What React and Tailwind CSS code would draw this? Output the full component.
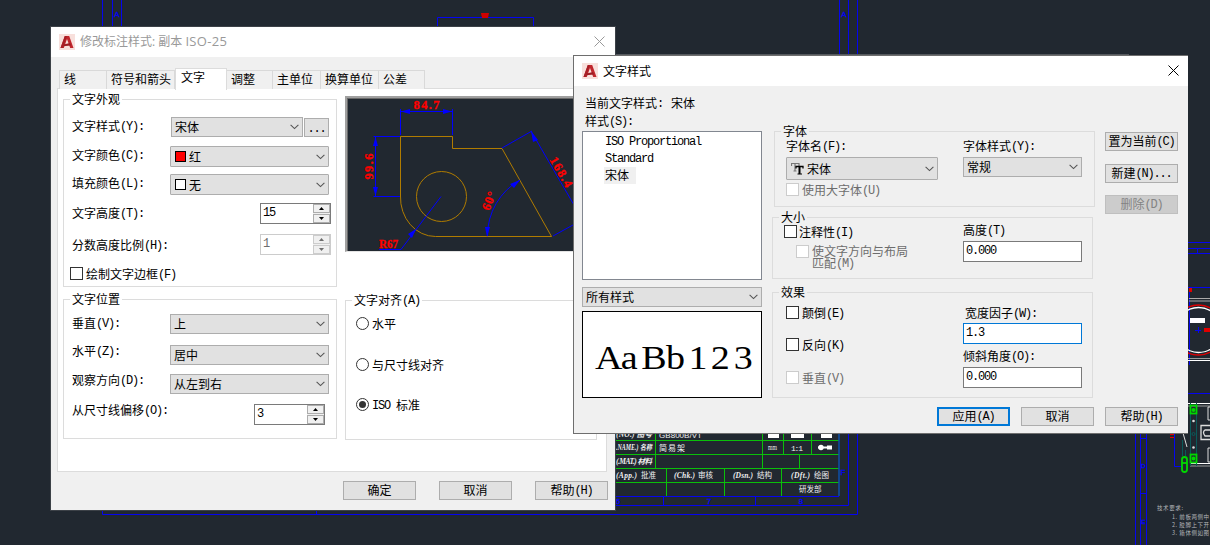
import React from "react";

const CJK = /([\u3000-\u9fff\uff00-\uffef]+)/;

// Dialog text: 12px Chinese glyphs mixed with half-width (6px) monospaced Latin.
function T({ children, className = "" }) {
  return (
    <span className={`inline-block whitespace-pre ${className}`}>
      {String(children)
        .split(CJK)
        .filter(Boolean)
        .map((part, i) =>
          CJK.test(part) ? (
            <span key={i}>{part}</span>
          ) : (
            <span
              key={i}
              className="align-[1px] font-['Liberation_Mono',monospace] text-[12px] leading-[0] tracking-[-1.2px]"
            >
              {part}
            </span>
          )
        )}
    </span>
  );
}

function Logo() {
  return (
    <svg width="16" height="16" viewBox="0 0 16 16" className="shrink-0">
      <rect width="16" height="16" fill="#f8e0dc" />
      <path d="M1.500 14 5.800 2H10.200L14.500 14H11.200L8 5 4.800 14Z" fill="#c0272d" />
      <path d="M4.500 10.500 11 9 12 11.500 4 12.200Z" fill="#9c1c22" />
      <path d="M5.800 2H8L3.800 14H1.500Z" fill="#a81f26" />
    </svg>
  );
}

function Close({ color, className = "" }) {
  return (
    <svg width="11" height="11" viewBox="0 0 11 11" className={className}>
      <path d="M.5 .5 10.5 10.5M10.5 .5 .5 10.5" stroke={color} />
    </svg>
  );
}

function Combo({ className = "", children }) {
  return (
    <div className={`flex shrink-0 items-center border border-[#adadad] bg-[#e1e1e1] ${className}`}>
      {children}
      <svg width="9" height="6" viewBox="0 0 9 6" className="ml-auto mr-[3px] shrink-0">
        <path d="M.6 .8 4.500 4.600 8.400 .8" fill="none" stroke="#555" strokeWidth="1.100" />
      </svg>
    </div>
  );
}

function Spinner({ value, disabled, className = "" }) {
  const color = disabled ? "#6d6d6d" : "#000";
  return (
    <div
      className={`flex h-[21px] w-[71px] shrink-0 border bg-white ${
        disabled ? "border-[#ccc] text-[#6d6d6d]" : "border-[#7a7a7a]"
      } ${className}`}
    >
      <T className="ml-[2px] mt-px">{value}</T>
      <div className="ml-auto flex w-[17px] flex-col gap-px bg-[#f0f0f0]">
        {["M0 3 2.5 0 5 3Z", "M0 0 5 0 2.5 3Z"].map((d) => (
          <div
            key={d}
            className={`flex h-[9px] items-center justify-center border ${
              disabled ? "border-[#ccc]" : "border-[#adadad]"
            }`}
          >
            <svg width="5" height="3" viewBox="0 0 5 3">
              <path d={d} fill={color} />
            </svg>
          </div>
        ))}
      </div>
    </div>
  );
}

function Check({ label, disabled, className = "", gap = "gap-[3px]" }) {
  return (
    <div className={`flex h-[13px] items-center ${gap} ${disabled ? "text-[#6d6d6d]" : ""} ${className}`}>
      <div className={`size-[13px] shrink-0 border bg-white ${disabled ? "border-[#ccc]" : "border-[#333]"}`} />
      <T>{label}</T>
    </div>
  );
}

function Radio({ label, on, className = "" }) {
  return (
    <div className={`flex h-[13px] items-center gap-[3px] ${className}`}>
      <div className="flex size-[13px] items-center justify-center rounded-full border border-[#333] bg-white">
        {on && <div className="size-[7px] rounded-full bg-[#333]" />}
      </div>
      <T>{label}</T>
    </div>
  );
}

function Group({ title, className = "", bg, children }) {
  return (
    <div className={`flex shrink-0 flex-col border border-[#dcdcdc] ${className}`}>
      <div className={`-mt-[8px] ml-[6px] flex h-[14px] shrink-0 self-start px-[2px] ${bg}`}>
        <T>{title}</T>
      </div>
      {children}
    </div>
  );
}

function Field({ label, labelClass = "", className = "", children }) {
  return (
    <div className={`ml-[8px] flex shrink-0 items-start ${className}`}>
      <T className={`shrink-0 ${labelClass}`}>{label}</T>
      {children}
    </div>
  );
}

function Button({ children, className = "border border-[#adadad] bg-[#e1e1e1]" }) {
  return (
    <div className={`flex h-[19px] w-[73px] shrink-0 items-center justify-center pb-[2px] ${className}`}>
      <T>{children}</T>
    </div>
  );
}

function Input({ children, className = "border-[#7a7a7a]" }) {
  return (
    <div className={`flex h-[21px] w-[119px] shrink-0 items-start border bg-white pl-[2px] pt-px ${className}`}>
      <T>{children}</T>
    </div>
  );
}

function StylePreview() {
  return (
    <svg
      width="226"
      height="152"
      viewBox="348 99 226 152"
      fill="none"
      className="block bg-[#212830] font-['Liberation_Serif',serif]"
    >
      <g stroke="#b07c00">
        <path d="M400.5 196V136.5H452.5V148.5H502L551.5 236.500H435.500A35 39 0 0 1 400.500 196" />
        <circle cx="441.500" cy="196.500" r="25" />
      </g>
      <g stroke="#0000ff">
        <path d="M400.5 109V135M452.500 109V135M400.500 111.500H452.500M373.500 136.500H400M373.500 196.500H400M375.500 137V196M379 249.500H401L441 196.500M487.500 236A64 64 0 0 1 520 180M502 148 532 131M553 236 582 220M531 131 592 236" />
      </g>
      <g fill="#0000ff">
        <path d="M401 111.500l9-2.500v5ZM452 111.500l-9-2.500v5ZM375.500 137l-2.500 9h5ZM375.500 196l-2.500-9h5ZM416 229l-8 5 4 4ZM487 237l-2-10h5ZM520 180l-10 4 4 4ZM531 131l2 11 5-2Z" />
      </g>
      <g fill="#ff0000" stroke="#ff0000" strokeWidth=".3" fontSize="12.500" fontWeight="700" textAnchor="middle">
        <text x="426.500" y="109" textLength="26">84.7</text>
        <text x="0" y="4" textLength="26" transform="translate(369 166.500) rotate(-90)">99.6</text>
        <text x="388.500" y="248" textLength="19" lengthAdjust="spacingAndGlyphs">R67</text>
        <text x="0" y="4" textLength="19" transform="translate(489 201) rotate(-68)">60°</text>
        <text x="0" y="4" textLength="33" transform="translate(561 172) rotate(60)">168.4</text>
      </g>
    </svg>
  );
}

function Drawing() {
  return (
    <svg width="1210" height="545" viewBox="0 0 1210 545" fill="none" className="absolute inset-0">
      <g stroke="#0505f0">
        <path d="M102.500 0V514.500H857.500V0M112.500 0V30M121.500 0V30M839.500 0V56M848.500 0V56M615 505.500H848.500V430M615 496.500H839M663.500 496V505M755.500 496V505M316.500 510V515" />
        <path d="M437.500 27V17.500H533.500V27" />
        <path d="M1135.500 433V545M1140.500 433V545M1146.500 433V545M1140 438.500H1147M1140 493.500H1147M1188 242.500H1210M1188 248.500H1210M1188 253.500H1210M1197.500 248V253M1188 287.500H1210M1188 393.500H1210M1189.500 288V365M1174.500 433V466.500H1182M1195 330.500H1201M1198.500 327V333" />
      </g>
      <g
        fill="#0505f0"
        stroke="#0505f0"
        strokeWidth=".3"
        fontFamily="Liberation Sans, sans-serif"
        fontSize="8"
        textAnchor="middle"
      >
        <text x="117" y="17">A</text>
        <text x="844" y="17">A</text>
        <text x="843" y="475">F</text>
        <text x="618" y="504">6</text>
        <text x="709" y="504">7</text>
        <text x="801" y="504">8</text>
        <text x="1143.500" y="468" fontSize="6">D</text>
        <text x="1143.500" y="524" fontSize="6">E</text>
      </g>
      <path d="M481 13h8l-1 5h-6Z" fill="#d00000" />
      <path d="M493 26.500H544" stroke="#777" strokeDasharray="2 1" />
      <g stroke="#0ac00a">
        <path d="M615 440.500H839M615 454.500H839M615 468.500H839M615 482.500H839M655.500 433V468M762.500 433V468M783.500 433V454M811.500 433V454M799.500 454V468M666.500 468V496M724.500 468V496M781.500 468V496" />
      </g>
      <path d="M839 433V496" stroke="#0d4fa8" strokeWidth="1.500" />
      <g fill="#fff">
        <path d="M768 433h11v5h-11ZM791 433h13v5h-13ZM821 433h11v5h-11Z" />
        <circle cx="821" cy="447.500" r="2.700" />
        <path d="M818 446.500h9v2h-9ZM827 445.500h5v4h-5Z" />
      </g>
      <g fill="#f0f0f0" fontFamily="Liberation Serif, Noto Sans CJK SC, serif" fontSize="7.500">
        <g fontStyle="italic" fontWeight="700">
          <text x="616" y="437" textLength="36">(NO.) 图号</text>
          <text x="616" y="450" textLength="36" lengthAdjust="spacingAndGlyphs">.NAME.) 名称</text>
          <text x="616" y="464" textLength="36">(.MAT.) 材料</text>
          <text x="616" y="478" textLength="21">(App.)</text>
          <text x="674" y="478" textLength="21">(Chk.)</text>
          <text x="733" y="478" textLength="20">(Dsn.)</text>
          <text x="791" y="478" textLength="19">(Dft.)</text>
        </g>
        <g fontSize="8">
          <text x="659" y="437.500" textLength="43" fontFamily="Liberation Sans, sans-serif">GB800B/VT</text>
          <text x="659" y="451" textLength="26">简易架</text>
          <text x="768" y="450" textLength="9" lengthAdjust="spacingAndGlyphs">mm</text>
          <text x="791" y="450.500" textLength="12" fontFamily="Liberation Mono, monospace">1:1</text>
        </g>
        <text x="641" y="478">批准</text>
        <text x="698" y="478">审核</text>
        <text x="757" y="478">结构</text>
        <text x="814" y="478">绘图</text>
        <text x="799" y="492">研发部</text>
      </g>
      <g>
        <path d="M1189 298.500H1210M1189 301H1210" stroke="#aaa" />
        <path d="M1188 360.500H1210M1188 403.500H1210M1190 463.500H1210" stroke="#fff" />
        <path d="M1188 358.500H1210M1188 406H1210M1190 466H1210" stroke="#999" />
        <path d="M1183 433 1187 447M1210 407H1208V420H1210M1210 448H1208V462H1210" stroke="#ddd" />
        <circle cx="1198.500" cy="330" r="25" stroke="#e00000" strokeWidth="1.500" />
        <circle cx="1198.500" cy="330" r="22.500" stroke="#fff" strokeWidth="1.300" />
        <rect x="1190" y="318" width="15" height="5" fill="#fff" />
        <path d="M1204 328h6v4h-6ZM1189 288h3v4h-3ZM1170 433h4v2h-4v2h4v1h-4Z" fill="#e00000" />
        <path d="M1190.500 403V466M1196.500 403V466M1182.500 440V456M1185.500 450V456" stroke="#0a5a5a" />
        <path d="M1210 425.500H1201V439.500H1210M1210 430H1205Q1202 432 1205 436H1210" stroke="#ddd" strokeWidth="1.300" />
        <g stroke="#00d800" strokeWidth="1.800">
          <rect x="1190.500" y="405.500" width="6" height="8" />
          <rect x="1190.500" y="454.500" width="6" height="8" />
          <rect x="1182" y="457" width="5" height="15" rx="2.500" />
          <circle cx="1193.500" cy="410" r="1" />
          <circle cx="1193.500" cy="458.500" r="1" />
          <path d="M1182 463H1187" />
        </g>
        <circle cx="1193.500" cy="421" r="1.300" fill="#ddd" />
        <circle cx="1193.500" cy="447.500" r="1.300" fill="#ddd" />
        <circle cx="1193.500" cy="434" r="1.500" stroke="#0a5a5a" />
      </g>
      <g fill="#b4b7ba" fontFamily="Noto Sans CJK SC, sans-serif" fontSize="5.500">
        <text x="1157" y="510" textLength="26">技术要求:</text>
        <text x="1172" y="518.500" textLength="37">1. 前板两侧中</text>
        <text x="1172" y="526.500" textLength="37">2. 胶脚上下开</text>
        <text x="1172" y="534.500" textLength="37">3. 箱体侧如图</text>
      </g>
      <path d="M615 54.500H1129" stroke="#55595e" />
    </svg>
  );
}

const TABS = [
  ["线", "w-[48px]"],
  ["符号和箭头", "w-[68px]"],
  ["文字", ""],
  ["调整", "w-[46px]"],
  ["主单位", "w-[48px]"],
  ["换算单位", "w-[58px]"],
  ["公差", "w-[46px]"],
];

function DimStyleDialog() {
  return (
    <div className="absolute left-[51px] top-[27px] flex h-[483px] w-[564px] flex-col bg-[#f0f0f0] shadow-[0_0_0_1px_#3c4147]">
      <div className="flex h-[30px] shrink-0 items-center bg-white pl-[8px] pr-[10px]">
        <Logo />
        <span className="ml-[5px] whitespace-pre font-['Open_Sans','Noto_Sans_CJK_SC',sans-serif] text-[12px] text-[#999]">
          修改标注样式: 副本 <span className="text-[13px] leading-[0] tracking-[0.3px]">ISO-25</span>
        </span>
        <Close color="#999" className="-mt-[2px] ml-auto" />
      </div>

      <div className="relative z-10 ml-[8px] mt-[11px] flex h-[21px] shrink-0 items-end">
        {TABS.map(([name, width]) =>
          name === "文字" ? (
            <div
              key={name}
              className="-mb-px flex h-[22px] w-[52px] items-start border border-b-0 border-[#dcdcdc] bg-white pl-[5px] pt-px"
            >
              <T>{name}</T>
            </div>
          ) : (
            <div
              key={name}
              className={`flex h-[19px] items-center border border-b-0 border-l-0 border-[#d9d9d9] bg-[#f0f0f0] pb-[2px] pl-[4px] first:border-l ${width}`}
            >
              <T>{name}</T>
            </div>
          )
        )}
      </div>

      <div className="-mt-px ml-[6px] flex h-[384px] w-[550px] shrink-0 border border-[#dcdcdc] bg-white">
        <div className="ml-[5px] flex w-[274px] shrink-0 flex-col">
          <Group title="文字外观" bg="bg-white" className="mt-[10px] h-[188px]">
            <Field label="文字样式(Y):" labelClass="w-[99px] mt-[2px]" className="mt-[11px]">
              <Combo className="h-[20px] w-[132px] pl-[3px]">
                <T>宋体</T>
              </Combo>
              <div className="ml-px mt-px flex h-[19px] w-[25px] items-center justify-center border border-[#adadad] bg-[#e1e1e1]">
                <T>...</T>
              </div>
            </Field>
            <Field label="文字颜色(C):" labelClass="w-[98px] mt-[2px]" className="mt-[9px]">
              <Combo className="h-[21px] w-[159px] rounded-[1px] pl-[4px]">
                <div className="mr-[3px] size-[11px] border border-black bg-[#ff0000]" />
                <T>红</T>
              </Combo>
            </Field>
            <Field label="填充颜色(L):" labelClass="w-[98px] mt-[2px]" className="mt-[7px]">
              <Combo className="h-[21px] w-[159px] rounded-[1px] pl-[4px]">
                <div className="mr-[3px] size-[11px] border border-black bg-white" />
                <T>无</T>
              </Combo>
            </Field>
            <Field label="文字高度(T):" labelClass="w-[188px] mt-[3px]" className="mt-[8px]">
              <Spinner value="15" />
            </Field>
            <Field label="分数高度比例(H):" labelClass="w-[188px] mt-[4px]" className="mt-[10px]">
              <Spinner value="1" disabled />
            </Field>
            <Check label="绘制文字边框(F)" className="ml-[6px] mt-[12px]" />
          </Group>

          <Group title="文字位置" bg="bg-white" className="mt-[12px] h-[140px]">
            <Field label="垂直(V):" labelClass="w-[98px] mt-[2px]" className="mt-[8px]">
              <Combo className="h-[20px] w-[159px] pl-[3px]">
                <T>上</T>
              </Combo>
            </Field>
            <Field label="水平(Z):" labelClass="w-[98px] -mt-px" className="mt-[11px]">
              <Combo className="h-[20px] w-[159px] pl-[3px]">
                <T>居中</T>
              </Combo>
            </Field>
            <Field label="观察方向(D):" labelClass="w-[98px] -mt-px" className="mt-[9px]">
              <Combo className="h-[20px] w-[159px] pl-[3px]">
                <T>从左到右</T>
              </Combo>
            </Field>
            <Field label="从尺寸线偏移(O):" labelClass="w-[182px] -mt-px" className="mt-[10px]">
              <Spinner value="3" />
            </Field>
          </Group>
        </div>

        <div className="ml-[8px] flex w-[252px] shrink-0 flex-col">
          <div className="mt-[7px] h-[156px] shrink-0 overflow-hidden border-b border-l-2 border-t-2 border-b-[#e3e3e3] border-l-[#a0a0a0] border-t-[#a0a0a0]">
            <div className="border-l border-t border-[#696969] bg-[#212830]">
              <StylePreview />
            </div>
          </div>
          <Group title="文字对齐(A)" bg="bg-white" className="mt-[48px] h-[140px]">
            <Radio label="水平" className="ml-[10px] mt-[10px]" />
            <Radio label="与尺寸线对齐" className="ml-[10px] mt-[28px]" />
            <Radio label="ISO 标准" on className="ml-[10px] mt-[27px]" />
          </Group>
        </div>
      </div>

      <div className="mt-[9px] flex gap-[23px] pl-[292px]">
        <Button>确定</Button>
        <Button>取消</Button>
        <Button>帮助(H)</Button>
      </div>
    </div>
  );
}

function TextStyleDialog() {
  return (
    <div className="absolute left-[573px] top-[55px] flex h-[379px] w-[615px] flex-col border-b border-l border-t border-[#6e6e6e] bg-[#f0f0f0]">
      <div className="flex h-[30px] shrink-0 items-center bg-white pl-[8px] pr-[9px]">
        <Logo />
        <span className="-mt-px ml-[5px] text-[12px]">文字样式</span>
        <Close color="#000" className="-mt-[2px] ml-auto" />
      </div>

      <div className="flex h-[312px] shrink-0 pl-[8px]">
        <div className="flex w-[180px] shrink-0 flex-col">
          <div className="ml-[3px] mt-[10px] flex h-[14px] shrink-0">
            <T className="w-[86px]">当前文字样式:</T>
            <T>宋体</T>
          </div>
          <T className="ml-[3px] mt-[4px] h-[14px] shrink-0">样式(S):</T>
          <div className="mt-[3px] flex h-[149px] shrink-0 flex-col items-start border border-[#828790] bg-white pl-[21px] pt-px">
            <T className="h-[17px] px-px leading-[15px]">ISO Proportional</T>
            <T className="h-[17px] px-px leading-[15px]">Standard</T>
            <T className="h-[17px] w-[32px] bg-[#f0f0f0] px-px leading-[15px]">宋体</T>
          </div>
          <Combo className="mt-[7px] h-[20px] pl-[3px]">
            <T>所有样式</T>
          </Combo>
          <div className="mt-[4px] h-[87px] shrink-0 border border-black bg-white">
            <svg width="178" height="85" viewBox="583 312 178 85" className="font-['Liberation_Serif',serif]">
              <text transform="translate(596 369) scale(1.120 1)" x="-1 22 40.500 62.500 82.500 102.500 123" y="0" fontSize="34">
                AaBb123
              </text>
            </svg>
          </div>
        </div>

        <div className="ml-[10px] flex w-[323px] shrink-0 flex-col">
          <Group title="字体" bg="bg-[#f0f0f0]" className="ml-[2px] mt-[45px] h-[76px] w-[321px]">
            <div className="flex pl-[11px]">
              <div className="flex w-[177px] flex-col">
                <T className="mt-px h-[14px]">字体名(F):</T>
                <Combo className="mt-[4px] h-[23px] w-[152px] rounded-[1px] pl-[4px]">
                  <svg width="13" height="13" viewBox="0 0 13 13" fill="none" className="mr-[3px]">
                    <path d="M.500 4V1.500H8V4M4 1.500V9M2.500 9H5.500" stroke="#777" strokeWidth="1.200" />
                    <path d="M5 6.500V4.500H12V6.500" stroke="#000" strokeWidth="1.300" />
                    <path d="M8.500 4V12" stroke="#000" strokeWidth="2" />
                    <path d="M6.500 12H11" stroke="#000" />
                  </svg>
                  <T>宋体</T>
                </Combo>
                <Check label="使用大字体(U)" disabled className="mt-[3px]" />
              </div>
              <div className="flex flex-col">
                <T className="mt-px h-[14px]">字体样式(Y):</T>
                <Combo className="mt-[4px] h-[20px] w-[119px] pl-[3px]">
                  <T>常规</T>
                </Combo>
              </div>
            </div>
          </Group>

          <Group title="大小" bg="bg-[#f0f0f0]" className="mt-[10px] h-[62px] w-[321px]">
            <div className="flex pl-[11px]">
              <div className="flex w-[179px] flex-col">
                <Check label="注释性(I)" gap="gap-[2px]" className="mt-px" />
                <div className="ml-[12px] mt-[7px] flex gap-[3px] text-[#6d6d6d]">
                  <div className="size-[13px] shrink-0 border border-[#ccc] bg-white" />
                  <T className="leading-[12px]">{"使文字方向与布局\n匹配(M)"}</T>
                </div>
              </div>
              <div className="flex flex-col">
                <T className="-mt-px h-[14px]">高度(T)</T>
                <Input className="mt-[4px] border-[#7a7a7a]">0.000</Input>
              </div>
            </div>
          </Group>

          <Group title="效果" bg="bg-[#f0f0f0]" className="mt-[13px] h-[106px] w-[321px]">
            <div className="flex pl-[13px]">
              <div className="flex w-[177px] flex-col">
                <Check label="颠倒(E)" className="mt-[7px]" />
                <Check label="反向(K)" className="mt-[19px]" />
                <Check label="垂直(V)" disabled className="mt-[20px]" />
              </div>
              <div className="flex flex-col">
                <T className="ml-[2px] mt-[7px] h-[14px]">宽度因子(W):</T>
                <Input className="mt-[3px] border-[#0078d7]">1.3</Input>
                <T className="mt-[5px] h-[14px]">倾斜角度(O):</T>
                <Input className="mt-[4px] border-[#7a7a7a]">0.000</Input>
              </div>
            </div>
          </Group>
        </div>

        <div className="ml-[10px] mt-[46px] flex flex-col">
          <Button>置为当前(C)</Button>
          <div className="mt-[13px]">
            <Button>新建(N)...</Button>
          </div>
          <div className="mt-[12px]">
            <Button className="border border-[#bfbfbf] bg-[#ccc] text-[#838383]">删除(D)</Button>
          </div>
        </div>
      </div>

      <div className="mt-[9px] flex gap-[11px] pl-[363px]">
        <Button className="border-2 border-[#0078d7] bg-[#e1e1e1]">应用(A)</Button>
        <Button>取消</Button>
        <Button>帮助(H)</Button>
      </div>
    </div>
  );
}

export default function App() {
  return (
    <div className="relative h-[545px] w-[1210px] overflow-hidden bg-[#212830] font-['Noto_Sans_CJK_SC',sans-serif] text-[12px] leading-[14px] text-black">
      <Drawing />
      <DimStyleDialog />
      <TextStyleDialog />
    </div>
  );
}
